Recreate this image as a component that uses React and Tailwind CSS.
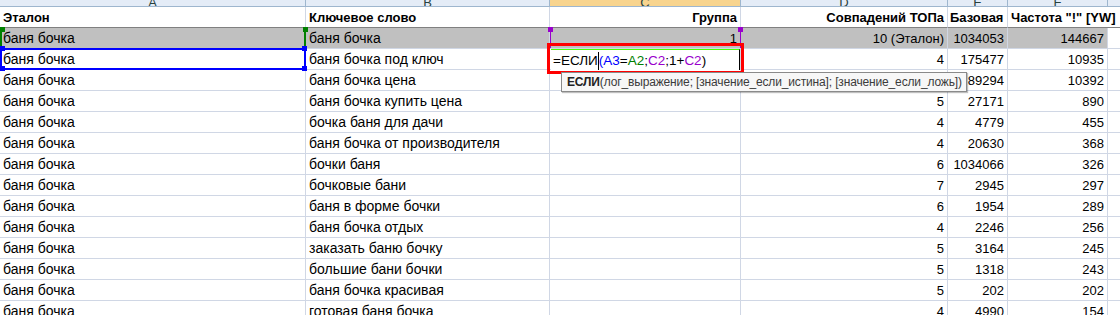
import React from "react";

const cols = [
  { key: "A", w: "w-[306px]" },
  { key: "B", w: "w-[244px]" },
  { key: "C", w: "w-[191px]" },
  { key: "D", w: "w-[207px]" },
  { key: "E", w: "w-[60px]" },
  { key: "F", w: "w-[100px]" },
  { key: "G", w: "w-[40px]" },
];

const rows = [
  ["баня бочка", "баня бочка под ключ", "", "4", "175477", "10935"],
  ["баня бочка", "баня бочка цена", "", "5", "89294", "10392"],
  ["баня бочка", "баня бочка купить цена", "", "5", "27171", "890"],
  ["баня бочка", "бочка баня для дачи", "", "4", "4779", "455"],
  ["баня бочка", "баня бочка от производителя", "", "4", "20630", "368"],
  ["баня бочка", "бочки баня", "", "6", "1034066", "326"],
  ["баня бочка", "бочковые бани", "", "7", "2945", "297"],
  ["баня бочка", "баня в форме бочки", "", "6", "1954", "289"],
  ["баня бочка", "баня бочка отдых", "", "4", "2246", "256"],
  ["баня бочка", "заказать баню бочку", "", "5", "3164", "245"],
  ["баня бочка", "большие бани бочки", "", "5", "1318", "243"],
  ["баня бочка", "баня бочка красивая", "", "5", "202", "202"],
  ["баня бочка", "готовая баня бочка", "", "4", "4990", "154"],
];

const cell =
  "h-[21px] shrink-0 border-r border-b border-[#d0d7e5] flex items-end pb-[1px] leading-[17px] overflow-hidden whitespace-nowrap";
const num = "justify-end pr-[3px] text-[13px]";

const Handle = ({ className }) => (
  <div className={`absolute w-[5px] h-[5px] ${className}`} />
);

const App = () => {
  return (
    <div
      className="relative w-[1120px] h-[315px] overflow-hidden bg-white text-[14px] text-black"
      style={{ fontFamily: '"Liberation Sans", Arial, sans-serif' }}
    >
      {/* column letters strip, mostly scrolled away */}
      <div className="flex h-[7px] border-b border-[#9eb6ce]">
        {cols.map((c) => (
          <div
            key={c.key}
            className={`${c.w} shrink-0 h-[6px] border-r border-[#9eb6ce] flex items-end justify-center overflow-hidden ${
              c.key === "C" ? "bg-[#f8d48e]" : "bg-[#e4ecf7]"
            }`}
          >
            <span className="leading-none text-[13px] text-[#27413e] -mb-[3px]">
              {c.key}
            </span>
          </div>
        ))}
      </div>

      {/* header row */}
      <div className="flex font-bold text-[13px]">
        <div className={`${cols[0].w} ${cell} pl-[3px] border-b-[#808080]`}>Эталон</div>
        <div className={`${cols[1].w} ${cell} pl-[3px] border-b-[#808080]`}>Ключевое слово</div>
        <div className={`${cols[2].w} ${cell} justify-end pr-[3px] border-b-[#808080]`}>Группа</div>
        <div className={`${cols[3].w} ${cell} justify-end pr-[3px] border-b-[#808080]`}>Совпадений ТОПа</div>
        <div className={`${cols[4].w} ${cell} pl-[2px] border-b-[#808080]`}>Базовая ч</div>
        <div className={`${cols[5].w} ${cell} pl-[3px] border-r-0 border-b-[#808080] overflow-visible z-10`}>
          Частота "!" [YW]
        </div>
        <div className={`${cols[6].w} ${cell} border-b-[#808080]`} />
      </div>

      {/* gray row 2 */}
      <div className="flex">
        <div className={`${cols[0].w} ${cell} pl-[3px] bg-[#c0c0c0]`}>баня бочка</div>
        <div className={`${cols[1].w} ${cell} pl-[3px] bg-[#c0c0c0]`}>баня бочка</div>
        <div className={`${cols[2].w} ${cell} ${num} bg-[#c0c0c0]`}>1</div>
        <div className={`${cols[3].w} ${cell} ${num} bg-[#c0c0c0]`}>10 (Эталон)</div>
        <div className={`${cols[4].w} ${cell} ${num} bg-[#c0c0c0]`}>1034053</div>
        <div className={`${cols[5].w} ${cell} ${num} bg-[#c0c0c0]`}>144667</div>
        <div className={`${cols[6].w} ${cell}`} />
      </div>

      {rows.map((r, i) => (
        <div key={i} className="flex">
          <div className={`${cols[0].w} ${cell} pl-[3px]`}>{r[0]}</div>
          <div className={`${cols[1].w} ${cell} pl-[3px]`}>{r[1]}</div>
          <div className={`${cols[2].w} ${cell} ${num}`}>{r[2]}</div>
          <div className={`${cols[3].w} ${cell} ${num}`}>{r[3]}</div>
          <div className={`${cols[4].w} ${cell} ${num}`}>{r[4]}</div>
          <div className={`${cols[5].w} ${cell} ${num}`}>{r[5]}</div>
          <div className={`${cols[6].w} ${cell}`} />
        </div>
      ))}

      {/* A2 green reference */}
      <div className="absolute left-0 top-[28px] w-[2px] h-[19px] bg-[#008000]" />
      <div className="absolute left-[304px] top-[28px] w-[2px] h-[19px] bg-[#008000]" />
      <Handle className="left-[303px] top-[27px] bg-[#008000]" />
      <Handle className="left-0 top-[27px] w-[3px] bg-[#008000]" />

      {/* A3 blue reference */}
      <div className="absolute left-0 top-[48px] w-[306px] h-[22px] border-2 border-[#0000ff]" />
      <Handle className="left-[302px] top-[46px] bg-[#0000ff]" />
      <Handle className="left-[302px] top-[66px] bg-[#0000ff]" />
      <Handle className="left-0 top-[46px] w-[3px] bg-[#0000ff]" />
      <Handle className="left-0 top-[66px] w-[3px] bg-[#0000ff]" />

      {/* C2 purple reference */}
      <div className="absolute left-[550px] top-[28px] w-px h-[20px] bg-[#9900cc]" />
      <div className="absolute left-[740px] top-[28px] w-px h-[20px] bg-[#9900cc]" />
      <Handle className="left-[548px] top-[27px] h-[4px] bg-[#9900cc]" />
      <Handle className="left-[738px] top-[27px] h-[4px] bg-[#9900cc]" />

      {/* active cell C3 being edited */}
      <div className="absolute left-[551px] top-[49px] w-[189px] h-[21px] bg-white border-t border-[#4cff00] border-r border-r-black flex items-end pb-[1px] pl-[2px] leading-[17px] text-[13.5px]">
        <span>=ЕСЛИ</span>
        <span className="w-px h-[18px] bg-black -mb-[1px]" />
        <span className="text-[#0000ff]">(A3</span>
        <span>=</span>
        <span className="text-[#008000]">A2</span>
        <span>;</span>
        <span className="text-[#9900cc]">C2</span>
        <span>;1+</span>
        <span className="text-[#9900cc]">C2</span>
        <span>)</span>
      </div>

      {/* red annotation frame */}
      <div className="absolute left-[547px] top-[43px] w-[197px] h-[31px] border-[3px] border-[#ff0000]" />

      {/* function tooltip */}
      <div className="absolute left-[561px] top-[72px] h-[20px] pr-[4px] bg-[#f7f7f7] border border-[#8a8a8a] shadow-[1px_1px_1px_rgba(0,0,0,0.25)] flex items-center pl-[5px] text-[12px] tracking-[-0.15px] text-[#3b3b3b] whitespace-nowrap">
        <span className="font-bold text-[#222]">ЕСЛИ</span>
        <span>(лог_выражение; [значение_если_истина]; [значение_если_ложь])</span>
      </div>
    </div>
  );
};

export default App;
